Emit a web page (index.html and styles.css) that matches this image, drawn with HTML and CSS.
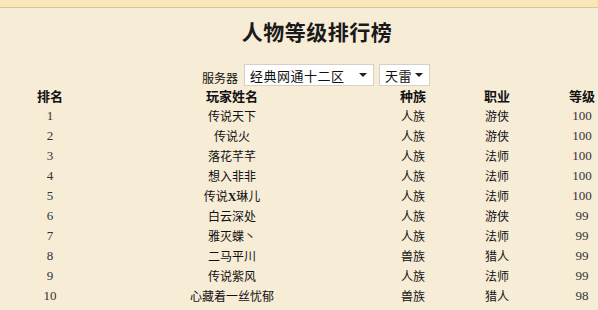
FILE: index.html
```html
<!DOCTYPE html>
<html lang="zh-CN">
<head>
<meta charset="UTF-8" />
<title>人物等级排行榜</title>
<link rel="stylesheet" href="styles.css">
</head>
<body>

<div class="topbar"></div>

<div class="page">
  <h1>人物等级排行榜</h1>

  <form class="filter">
    <span class="filter-label">服务器</span>
    <label class="pick pick-server">
      <select name="server">
        <option>经典网通十二区</option>
      </select>
    </label>
    <label class="pick pick-realm">
      <select name="realm">
        <option>天雷</option>
      </select>
    </label>
  </form>

  <table class="rank">
    <colgroup>
      <col class="c-rank"><col class="c-name"><col class="c-race"><col class="c-job"><col class="c-lv">
    </colgroup>
    <thead>
      <tr><th>排名</th><th>玩家姓名</th><th>种族</th><th>职业</th><th>等级</th></tr>
    </thead>
    <tbody>
      <tr><td class="num">1</td><td>传说天下</td><td>人族</td><td>游侠</td><td class="num">100</td></tr>
      <tr><td class="num">2</td><td>传说火</td><td>人族</td><td>游侠</td><td class="num">100</td></tr>
      <tr><td class="num">3</td><td>落花芊芊</td><td>人族</td><td>法师</td><td class="num">100</td></tr>
      <tr><td class="num">4</td><td>想入非非</td><td>人族</td><td>法师</td><td class="num">100</td></tr>
      <tr><td class="num">5</td><td>传说<b>X</b>琳儿</td><td>人族</td><td>法师</td><td class="num">100</td></tr>
      <tr><td class="num">6</td><td>白云深处</td><td>人族</td><td>游侠</td><td class="num">99</td></tr>
      <tr><td class="num">7</td><td>雅灭蝶丶</td><td>人族</td><td>法师</td><td class="num">99</td></tr>
      <tr><td class="num">8</td><td>二马平川</td><td>兽族</td><td>猎人</td><td class="num">99</td></tr>
      <tr><td class="num">9</td><td>传说紫风</td><td>人族</td><td>法师</td><td class="num">99</td></tr>
      <tr><td class="num">10</td><td>心藏着一丝忧郁</td><td>兽族</td><td>猎人</td><td class="num">98</td></tr>
      <tr><td class="num">11</td><td>小狼</td><td>人族</td><td>法师</td><td class="num">98</td></tr>
    </tbody>
  </table>
</div>

</body>
</html>
```

FILE: styles.css
```css
/* Reset */
*, *::before, *::after {
  margin: 0; padding: 0; box-sizing: border-box;
}
html, body {
  overflow: hidden;
}
body {
  background: #f7ecd6;
  color: #111;
  font-family: "Liberation Serif", "Noto Sans CJK SC", serif;
  font-size: 12px;
}

.topbar {
  height: 8px;
  background: #f8e8b7;
  border-bottom: 1px solid #d8c79d;
}

/* content is laid out a bit wider than the window */
.page {
  width: 634px;
}

h1 {
  margin-top: 8px;
  height: 30px;
  line-height: 30px;
  text-align: center;
  font-family: "Noto Sans CJK SC", sans-serif;
  font-size: 21px;
  font-weight: 700;
  letter-spacing: 0.5px;
  color: #1a1a1a;
}

.filter {
  display: flex;
  justify-content: center;
  align-items: center;
  gap: 5px;
  height: 22px;
  margin-top: 18px;
  padding-right: 2px;
}
.filter-label {
  font-family: "Noto Sans CJK SC", sans-serif;
  font-size: 12px;
  padding-top: 4px;
  margin-right: 1px;
}

.pick {
  position: relative;
  display: block;
  height: 22px;
  background: #fff;
  border: 1px solid #d4d0c8;
}
.pick select {
  appearance: none;
  -webkit-appearance: none;
  width: 100%;
  height: 100%;
  border: none;
  background: none;
  padding-left: 5px;
  font-family: "Noto Sans CJK SC", sans-serif;
  font-size: 13px;
  letter-spacing: 0.5px;
  color: #111;
  outline: none;
}
/* the small dropdown arrow */
.pick::after {
  content: "";
  position: absolute;
  right: 6px;
  top: 8px;
  border-left: 4px solid transparent;
  border-right: 4px solid transparent;
  border-top: 4px solid #222;
  pointer-events: none;
}
.pick-server { width: 130px; }
.pick-realm { width: 51px; }

.rank {
  width: 632px;
  border-collapse: collapse;
  table-layout: fixed;
  margin-top: -1px;
}
.c-rank { width: 100px; }
.c-name { width: 264px; }
.c-race { width: 98px; }
.c-job { width: 70px; }
.c-lv { width: 100px; }

.rank th {
  height: 21px;
  line-height: 19px;
  padding-bottom: 1px;
  font-family: "Noto Sans CJK SC", sans-serif;
  font-size: 13px;
  font-weight: 700;
  text-align: center;
  vertical-align: middle;
  color: #111;
}
.rank tbody tr {
  height: 20px;
}
.rank td {
  height: 20px;
  line-height: 20px;
  text-align: center;
  vertical-align: middle;
  font-family: "Noto Sans CJK SC", sans-serif;
  font-size: 12px;
  white-space: nowrap;
}
.rank td.num {
  font-family: "Liberation Serif", serif;
  font-size: 13px;
  color: #333;
}
.rank td b {
  font-family: "Liberation Serif", serif;
  font-weight: 700;
  line-height: 1;
}
```
